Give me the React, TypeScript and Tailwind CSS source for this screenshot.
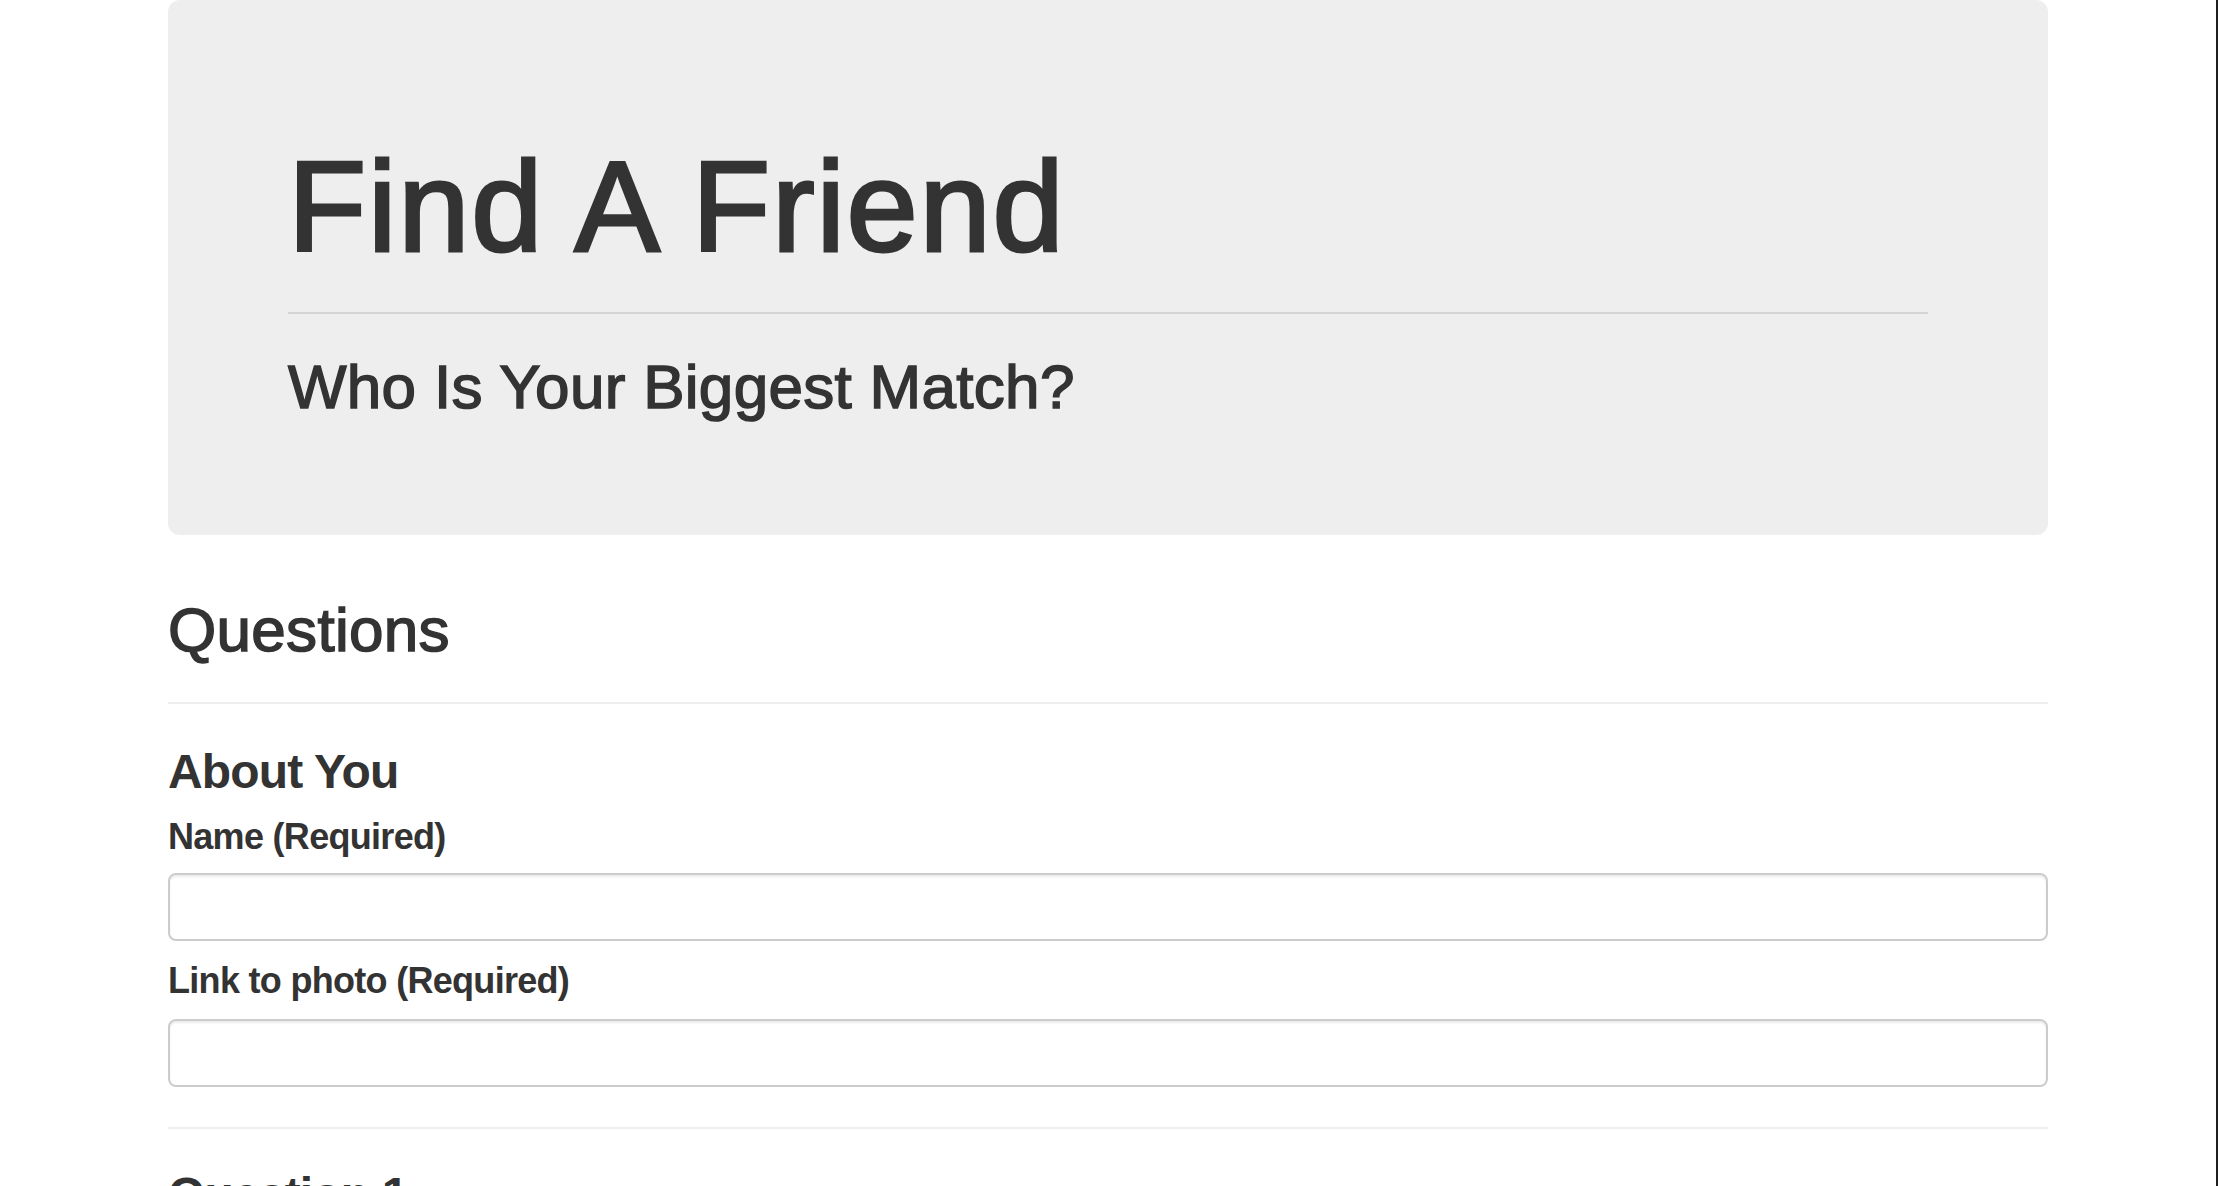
import React from "react";

export default function App() {
  return (
    <div
      className="flex h-screen w-full overflow-hidden bg-white text-[#333333]"
      style={{ fontFamily: '"Liberation Sans", Arial, Helvetica, sans-serif' }}
    >
      <div className="flex-1 overflow-hidden">
        <div className="mx-auto w-[1880px]">
          <div className="rounded-[12px] bg-[#eeeeee] px-[120px] pt-[143px] pb-[117px]">
            <h1 className="text-[128px] font-normal leading-none tracking-[1.8px] [-webkit-text-stroke:3px_#333333]">
              Find A Friend
            </h1>
            <hr className="mt-[41px] border-0 border-t-2 border-[#d5d5d5]" />
            <h2 className="mt-[42px] text-[62px] font-normal leading-none tracking-[0.3px] [-webkit-text-stroke:1.5px_#333333]">
              Who Is Your Biggest Match?
            </h2>
          </div>

          <h2 className="mt-[64px] text-[62px] font-normal leading-none tracking-[0.3px] [-webkit-text-stroke:1.5px_#333333]">
            Questions
          </h2>
          <hr className="mt-[41px] border-0 border-t-2 border-[#eeeeee]" />

          <h3 className="mt-[44px] text-[48px] font-bold leading-none tracking-[-0.85px]">About You</h3>
          <label className="mt-[23px] block text-[36px] font-bold leading-none tracking-[-0.7px]">
            Name (Required)
          </label>
          <input
            type="text"
            className="mt-[18px] block h-[68px] w-full rounded-[8px] border-2 border-[#cccccc] bg-white px-6 text-[28px] shadow-[inset_0_2px_2px_rgba(0,0,0,0.075)] outline-none"
          />
          <label className="mt-[22px] block text-[36px] font-bold leading-none tracking-[-0.7px]">
            Link to photo (Required)
          </label>
          <input
            type="text"
            className="mt-[20px] block h-[68px] w-full rounded-[8px] border-2 border-[#cccccc] bg-white px-6 text-[28px] shadow-[inset_0_2px_2px_rgba(0,0,0,0.075)] outline-none"
          />
          <hr className="mt-[40px] border-0 border-t-2 border-[#eeeeee]" />

          <h3 className="mt-[42px] text-[48px] font-bold leading-none tracking-[-0.85px]">Question 1</h3>
        </div>
      </div>
      <div className="w-[2px] shrink-0 bg-[#1f1f1f]" />
    </div>
  );
}
